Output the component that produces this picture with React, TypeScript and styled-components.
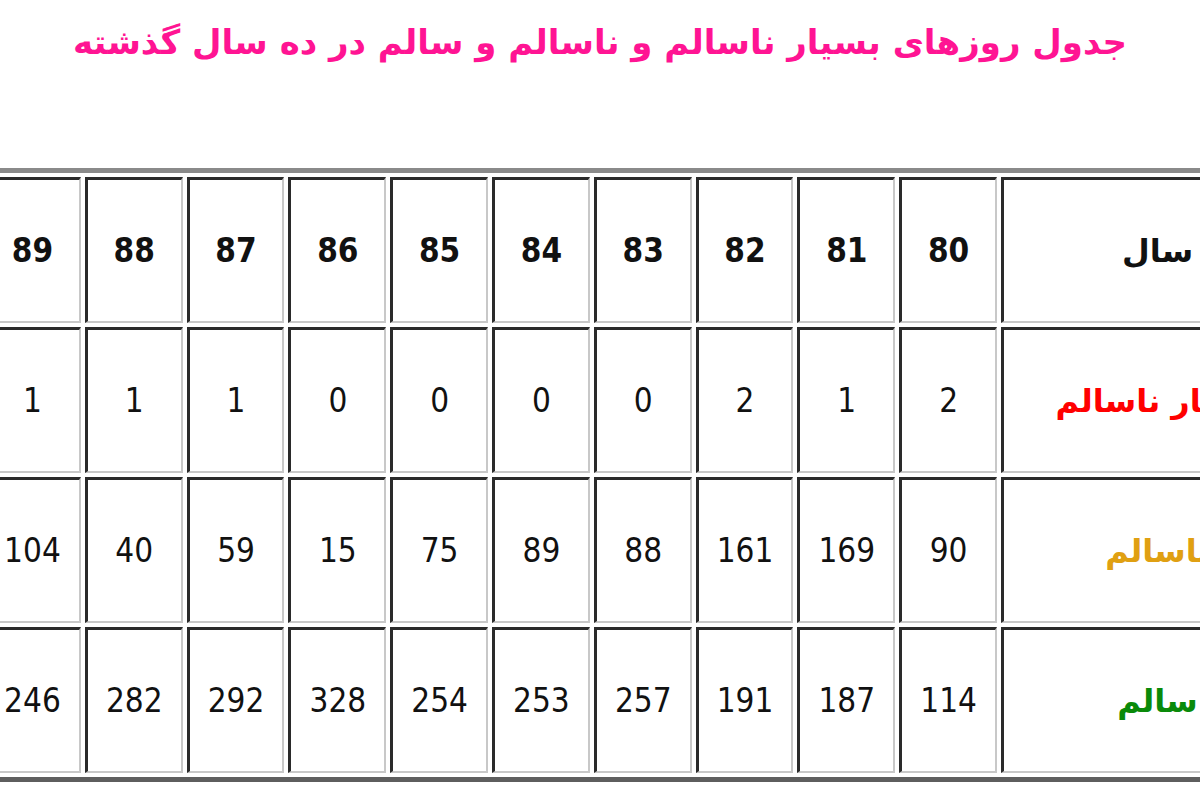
import styled, { createGlobalStyle } from "styled-components"

const GlobalStyle = createGlobalStyle`
  html, body {
    margin: 0;
    padding: 0;
    background: #ffffff;
  }
  body {
    font-family: "DejaVu Sans", Tahoma, sans-serif;
  }
`

const years = [80, 81, 82, 83, 84, 85, 86, 87, 88, 89]

const rows = [
  { label: "بسیار ناسالم", color: "#ff0000", values: [2, 1, 2, 0, 0, 0, 0, 1, 1, 1] },
  { label: "ناسالم", color: "#e0a012", values: [90, 169, 161, 88, 89, 75, 15, 59, 40, 104] },
  { label: "سالم", color: "#0a8a0a", values: [114, 187, 191, 257, 253, 254, 328, 292, 282, 246] },
]

const Page = styled.div`
  width: 1200px;
  height: 800px;
  overflow: hidden;
`

const Title = styled.h1`
  margin: 0;
  padding-top: 22px;
  height: 40px;
  line-height: 40px;
  text-align: center;
  direction: rtl;
  font-family: "DejaVu Sans", sans-serif;
  font-size: 34px;
  font-weight: bold;
  color: #ff1493;
`

const TableWrap = styled.div`
  margin-top: 106px;
  overflow: hidden;
`

const Grid = styled.div`
  direction: rtl;
  width: 1348px;
  margin-left: -26px;
  box-sizing: border-box;
  display: grid;
  grid-template-columns: 312px repeat(10, 97.8px);
  grid-auto-rows: 146px;
  gap: 4px;
  padding: 4px;
  border: 5px solid #8a8a8a;
  border-bottom-color: #5e5e5e;
  border-right-color: #5e5e5e;
  background: #ffffff;
`

const Cell = styled.div<{ $bold?: boolean }>`
  box-sizing: border-box;
  display: flex;
  align-items: center;
  justify-content: center;
  background: #ffffff;
  border-top: 3px solid #2a2a2a;
  border-left: 3px solid #2a2a2a;
  border-bottom: 2px solid #c8c8c8;
  border-right: 2px solid #c8c8c8;
  font-family: "DejaVu Sans Condensed", "DejaVu Sans", sans-serif;
  font-stretch: condensed;
  font-size: 33px;
  font-weight: ${(p) => (p.$bold ? "bold" : "normal")};
  color: #111111;
`

const Label = styled.span<{ $color: string }>`
  font-family: "DejaVu Sans", sans-serif;
  font-stretch: normal;
  font-size: 32px;
  font-weight: bold;
  color: ${(p) => p.$color};
`

export default function App() {
  return (
    <Page>
      <GlobalStyle />
      <Title>جدول روزهای بسیار ناسالم و ناسالم و سالم در ده سال گذشته</Title>
      <TableWrap>
        <Grid>
          <Cell>
            <Label $color="#111111">سال</Label>
          </Cell>
          {years.map((y) => (
            <Cell key={y} $bold>
              {y}
            </Cell>
          ))}
          {rows.map((row) => [
            <Cell key={row.label}>
              <Label $color={row.color}>{row.label}</Label>
            </Cell>,
            ...row.values.map((v, i) => <Cell key={row.label + i}>{v}</Cell>),
          ])}
        </Grid>
      </TableWrap>
    </Page>
  )
}
